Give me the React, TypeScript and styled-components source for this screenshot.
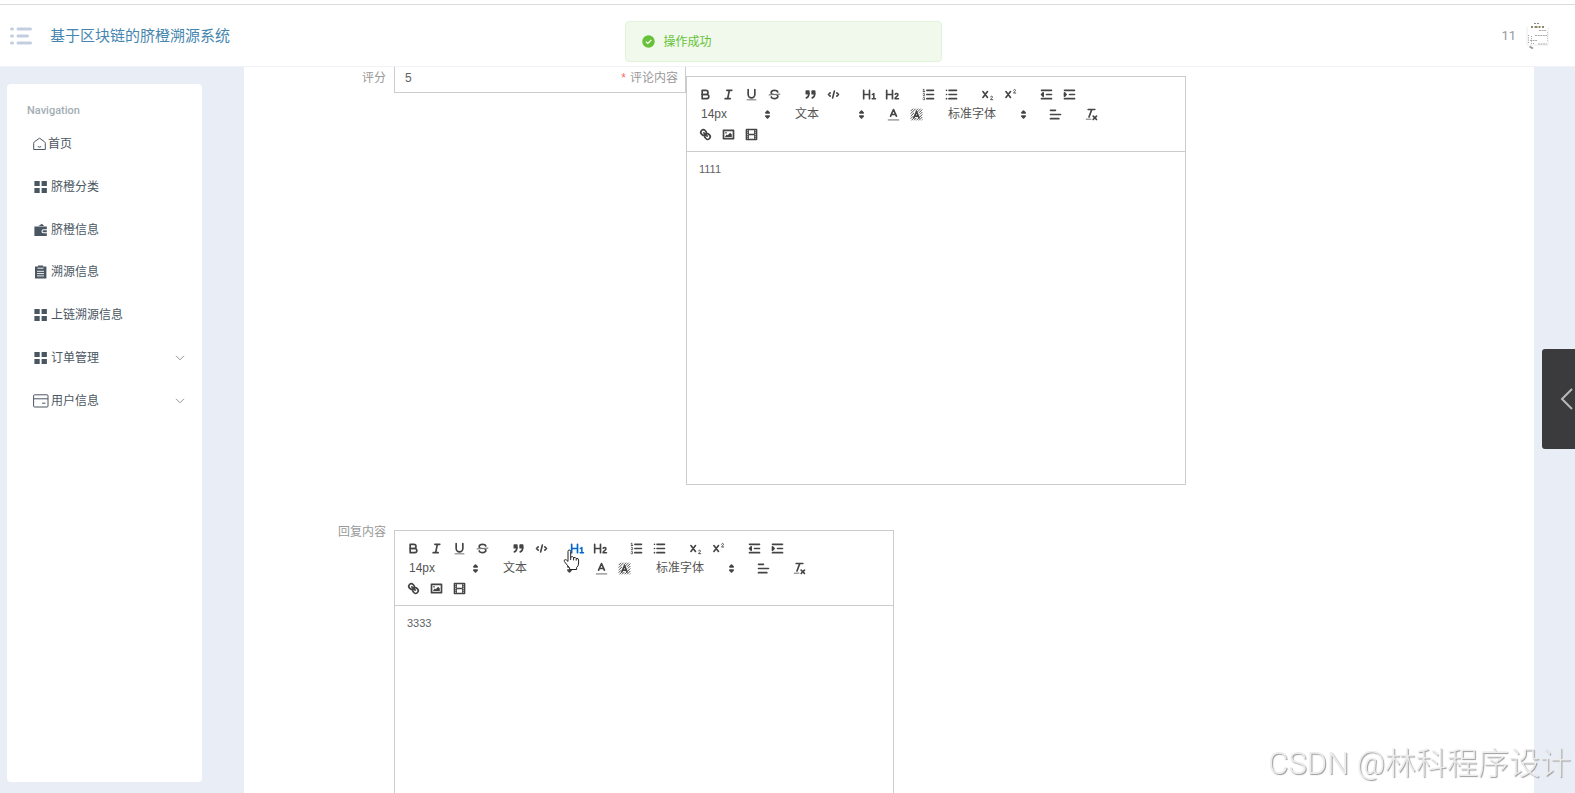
import React from "react";
import styled, { createGlobalStyle } from "styled-components";

const GlobalStyle = createGlobalStyle`
  * { box-sizing: border-box; }
  body {
    margin: 0;
    overflow: hidden;
    background: #fff;
    color: #606266;
    font: 12px/20px "Liberation Sans", "Noto Sans CJK SC", sans-serif;
  }
  button, input, select, textarea { font: inherit; color: inherit; }
`;

const Page = styled.div`
  display: flex;
  flex-direction: column;
  height: 100vh;
  padding-top: 4px;
`;

const Header = styled.header`
  flex: none;
  display: flex;
  align-items: center;
  height: 63px;
  padding: 0 25px 0 10px;
  border-top: 1px solid #dcdcdc;
  border-bottom: 1px solid #f0f2f8;
`;

const MenuButton = styled.button`
  display: flex;
  padding: 0;
  border: 0;
  background: none;
`;

const Title = styled.h1`
  flex: 1;
  margin: 0 0 0 18px;
  color: #4586b0;
  font-size: 15px;
  font-weight: 400;
`;

const Account = styled.div`
  display: flex;
  align-items: center;
  gap: 9px;
  color: #999;
  font: 13px/20px Roboto, sans-serif;
`;

const Body = styled.div`
  flex: 1;
  display: flex;
  min-height: 0;
  background: #e9edf5;
`;

const Sidebar = styled.aside`
  flex: none;
  width: 195px;
  margin: 17px 42px 11px 7px;
  padding: 17px 17px 0 20px;
  border-radius: 4px;
  background: #fff;
`;

const NavTitle = styled.h2`
  margin: 0 0 2px;
  color: #a3adb4;
  font: 500 11px/20px Roboto, sans-serif;
`;

const NavList = styled.nav`
  display: grid;
  grid-auto-rows: 1fr;
  height: 299px;
`;

const NavLink = styled.a<{ $slot: number }>`
  display: grid;
  grid-template-columns: ${(p) => p.$slot}px 1fr auto;
  align-items: center;
  gap: 2px;
  padding-left: 6px;
  color: #4a5763;
  text-decoration: none;
`;

const Main = styled.main`
  flex: 1;
  display: flex;
  flex-direction: column;
  gap: 36px;
  margin-right: 41px;
  overflow: hidden;
  background: #fff;
`;

const FormRow = styled.div`
  flex: none;
  display: flex;
  align-items: flex-start;
`;

const Label = styled.label`
  flex: none;
  width: 150px;
  padding: 1px 8px 0 0;
  color: #999;
  text-align: right;
`;

const ScoreBox = styled.div`
  display: flex;
  width: 292px;
  height: 26px;
  padding-top: 1px;
  border: solid #ccc;
  border-width: 0 1px 1px;
`;

const ScoreInput = styled.input`
  flex: 1;
  min-width: 0;
  height: 20px;
  padding: 0 0 0 10px;
  border: 0;
  outline: 0;
  background: none;
`;

const InnerLabel = styled.label`
  padding-right: 7px;
  color: #999;
`;

const Required = styled.span`
  margin-right: 4px;
  color: #f56c6c;
`;

const EditorBox = styled.section`
  width: 500px;
  margin-top: 9px;
  border: 1px solid #ccc;
  background: #fff;
`;

const Toolbar = styled.div`
  padding: 7px;
  border-bottom: 1px solid #ccc;
`;

const ToolRow = styled.div`
  display: flex;
  gap: 13px;
  height: 20px;
`;

const ToolGroup = styled.div`
  display: flex;
`;

const ToolButton = styled.button<{ $active?: boolean }>`
  display: flex;
  align-items: center;
  justify-content: center;
  width: 23px;
  height: 20px;
  padding: 0;
  border: 0;
  background: none;
  color: ${(p) => (p.$active ? "#0066cc" : "#444")};
`;

const PickerBox = styled.div<{ $wide?: boolean }>`
  display: grid;
  align-items: center;
  width: ${(p) => (p.$wide ? 90 : 81)}px;
  color: #444;

  > * { grid-area: 1 / 1; }
  > svg { justify-self: end; pointer-events: none; }
`;

const PickerSelect = styled.select`
  width: 100%;
  height: 20px;
  padding: 0 15px 0 7px;
  border: 0;
  appearance: none;
  background: none;
  color: #555;
`;

const EditorText = styled.textarea`
  display: block;
  width: 100%;
  height: 332px;
  padding: 7px 12px;
  border: 0;
  outline: 0;
  resize: none;
  background: none;
  font-size: 11px;
`;

const Toast = styled.div`
  position: fixed;
  top: 21px;
  left: calc(50% - 163px);
  display: flex;
  align-items: center;
  gap: 9px;
  width: 317px;
  height: 41px;
  padding-left: 16px;
  border: 1px solid #e1f3d8;
  border-radius: 4px;
  background: #f0f9eb;
  color: #67c23a;
`;

const DrawerTab = styled.button`
  position: fixed;
  right: 0;
  top: calc(50% - 48px);
  display: flex;
  align-items: center;
  justify-content: flex-end;
  width: 33px;
  height: 100px;
  padding: 0 1px 0 0;
  border: 0;
  border-radius: 3px 0 0 3px;
  background: #3b3b3d;
`;

const Watermark = styled.div`
  position: fixed;
  right: 4px;
  bottom: 9px;
  color: #ececec;
  font: 31px/40px Roboto, "Noto Sans CJK SC", sans-serif;
  font-weight: 300;
  text-shadow: 1px 1px 1px #999;
  white-space: nowrap;
`;

const Pointer = styled.svg`
  position: absolute;
  left: 563px;
  top: 549px;
`;

const strokeProps = {
  fill: "none",
  stroke: "currentColor",
  strokeWidth: 2,
  strokeLinecap: "round" as const,
  strokeLinejoin: "round" as const,
};

const hBars = "M2 4V14M9 4V14M2 9H9";

const toolIcons: Record<string, React.ReactNode> = {
  bold: (
    <>
      <path d="M5,4H9.5A2.5,2.5,0,0,1,9.5,9H5Z" />
      <path d="M5,9h5.5A2.5,2.5,0,0,1,10.5,14H5Z" />
    </>
  ),
  italic: <path d="M7 4H13M5 14H11M8 14L10 4" />,
  underline: (
    <>
      <path d="M5,3V9a4,4,0,0,0,8,0V3" />
      <rect x="3" y="15" width="12" height="1" rx=".5" fill="currentColor" stroke="none" />
    </>
  ),
  strike: (
    <>
      <path d="M15.5 8.5L2.5 9.5" strokeWidth="1" />
      <g fill="currentColor" stroke="none">
        <path d="M9.007,8C6.542,7.791,6,7.519,6,6.5,6,5.792,7.283,5,9,5c1.571,0,2.765.679,2.969,1.309a1,1,0,0,0,1.9-.617C13.356,4.106,11.354,3,9,3,6.2,3,4,4.538,4,6.5a3.2,3.2,0,0,0,.5,1.843Z" />
        <path d="M8.984,10C11.457,10.208,12,10.479,12,11.5c0,.708-1.283,1.5-3,1.5-1.571,0-2.765-.679-2.969-1.309a1,1,0,1,0-1.9.617C4.644,13.894,6.646,15,9,15c2.8,0,5-1.538,5-3.5a3.2,3.2,0,0,0-.5-1.843Z" />
      </g>
    </>
  ),
  quote: (
    <g fill="currentColor">
      <rect x="4" y="5" width="3" height="3" />
      <rect x="11" y="5" width="3" height="3" />
      <path d="M7,8c0,4.031-3,5-3,5M14,8c0,4.031-3,5-3,5" fill="none" />
    </g>
  ),
  code: <path d="M5 7L3 9L5 11M13 7L15 9L13 11M10 5L8 13" />,
  heading1: (
    <>
      <path d={hBars} />
      <path d="M12.4 9L14.2 7.8V14M12.2 14H16.2" strokeWidth="1.8" />
    </>
  ),
  heading2: (
    <>
      <path d={hBars} />
      <path d="M12.2 8.8C12.8 7.4 15.6 7.4 15.6 9.4C15.6 11.2 12.2 12 12 14H16.2" strokeWidth="1.8" />
    </>
  ),
  ordered: (
    <>
      <path d="M7 4H15M7 9H15M7 14H15" />
      <path
        d="M2.5 5.5H4.5M2.5 3L3.5 2.5V5.5M4.5,10.5h-2c0-.234,1.85-1.076,1.85-2.234A.959.959,0,0,0,2.5,8.156M2.5,14.846a.959.959,0,0,0,1.85-.109A.7.7,0,0,0,3.75,14a.688.688,0,0,0,.6-.736A.959.959,0,0,0,2.5,13.155"
        strokeWidth="1"
      />
    </>
  ),
  bullet: <path d="M6 4H15M6 9H15M6 14H15M3 4H3M3 9H3M3 14H3" />,
  sub: (
    <>
      <path d="M3.5 5.5L9 12.5M9 5.5L3.5 12.5" />
      <path d="M12.6 11.8C13 10.6 15.2 10.8 15 12.2C14.8 13.2 13 13.8 12.6 15.2H15.3" strokeWidth="1.1" />
    </>
  ),
  sup: (
    <>
      <path d="M3.5 5.5L9 12.5M9 5.5L3.5 12.5" />
      <path d="M12.6 3.8C13 2.6 15.2 2.8 15 4.2C14.8 5.2 13 5.8 12.6 7.2H15.3" strokeWidth="1.1" />
    </>
  ),
  outdent: (
    <>
      <path d="M3 14H15M3 4H15M9 9H15" />
      <path d="M5 7V11L3 9Z" fill="currentColor" />
    </>
  ),
  indent: (
    <>
      <path d="M3 14H15M3 4H15M9 9H15" />
      <path d="M3 7V11L5 9Z" fill="currentColor" />
    </>
  ),
  color: (
    <>
      <path d="M3 15.5H15" opacity=".45" />
      <path d="M5.5 11L9 3L12.5 11M6.4 9H11.6" />
    </>
  ),
  background: (
    <>
      <path
        d="M2 5L5 2M2 8L8 2M2 11L6 7M8 5L11 2M2 14L5 11M10 6L14 2M3 16L6 13M12 7L16 3M6 16L9 13M13 9L16 6M9 16L12 13M13 12L16 9M12 16L16 12M15 16L16 15"
        strokeWidth="1.1"
        strokeLinecap="butt"
      />
      <path d="M5.8 13L9 5.5L12.2 13M6.8 11H11.2" />
    </>
  ),
  align: <path d="M3 9H15M3 14H13M3 4H9" />,
  clean: (
    <>
      <path d="M5 3H13M6 12L9.35 3" />
      <path d="M11 11L15 15M15 11L11 15" />
      <rect x="2" y="14" width="7" height="1" rx=".5" fill="currentColor" stroke="none" />
    </>
  ),
  link: (
    <>
      <path d="M7 7L11 11" />
      <path d="M8.9,4.577a3.476,3.476,0,0,1,.36,4.679A3.476,3.476,0,0,1,4.577,8.9C3.185,7.5,2.035,6.4,4.217,4.217S7.5,3.185,8.9,4.577Z" />
      <path d="M13.423,9.1a3.476,3.476,0,0,0-4.679-.36,3.476,3.476,0,0,0,.36,4.679c1.392,1.392,2.5,2.542,4.679.36S14.815,10.5,13.423,9.1Z" />
    </>
  ),
  image: (
    <>
      <rect x="3" y="4" width="12" height="10" />
      <g fill="currentColor" stroke="none">
        <circle cx="6" cy="7" r="1" />
        <path d="M5 12V11L7 9L8 10L11 7L13 9V12Z" />
      </g>
    </>
  ),
  video: (
    <>
      <rect x="3" y="3" width="12" height="12" />
      <path
        d="M5 3h1v12h-1zM12 3h1v12h-1zM5 8h8v2h-8zM3 5h3v1h-3zM3 7h3v1h-3zM3 10h3v1h-3zM3 12h3v1h-3zM12 5h3v1h-3zM12 7h3v1h-3zM12 10h3v1h-3zM12 12h3v1h-3z"
        fill="currentColor"
        stroke="none"
      />
    </>
  ),
};

const Glyph = ({ children }: { children: React.ReactNode }) => (
  <svg width="15" height="15" viewBox="0 0 18 18" {...strokeProps}>
    {children}
  </svg>
);

const Tools = ({ names, active }: { names: string[]; active?: string }) => (
  <ToolGroup>
    {names.map((name) => (
      <ToolButton key={name} type="button" aria-label={name} $active={name === active}>
        <Glyph>{toolIcons[name]}</Glyph>
      </ToolButton>
    ))}
  </ToolGroup>
);

const Picker = ({ value, label, wide }: { value: string; label: string; wide?: boolean }) => (
  <PickerBox $wide={wide}>
    <PickerSelect aria-label={label} defaultValue={value}>
      <option>{value}</option>
    </PickerSelect>
    <Glyph>
      <path d="M7 11L9 13L11 11ZM7 7L9 5L11 7Z" />
    </Glyph>
  </PickerBox>
);

interface EditorProps {
  id: string;
  text: string;
  active?: string;
}

const Editor = ({ id, text, active }: EditorProps) => (
  <EditorBox>
    <Toolbar>
      <ToolRow>
        <Tools names={["bold", "italic", "underline", "strike"]} />
        <Tools names={["quote", "code"]} />
        <Tools names={["heading1", "heading2"]} active={active} />
        <Tools names={["ordered", "bullet"]} />
        <Tools names={["sub", "sup"]} />
        <Tools names={["outdent", "indent"]} />
      </ToolRow>
      <ToolRow>
        <Picker value="14px" label="size" />
        <Picker value="文本" label="header" />
        <Tools names={["color", "background"]} />
        <Picker value="标准字体" label="font" wide />
        <Tools names={["align"]} />
        <Tools names={["clean"]} />
      </ToolRow>
      <ToolRow>
        <Tools names={["link", "image", "video"]} />
      </ToolRow>
    </Toolbar>
    <EditorText id={id} defaultValue={text} spellCheck={false} />
  </EditorBox>
);

const HomeIcon = () => (
  <svg width="13" height="14" viewBox="0 0 13 14" fill="none" stroke="currentColor">
    <path d="M6.5 1.2L11.6 4.8Q12.3 5.4 12.3 6.3V12.5H.7V6.3Q.7 5.4 1.4 4.8ZM4.8 9.6Q6.5 10.6 8.2 9.6" />
  </svg>
);

const GridIcon = () => (
  <svg width="15" height="14" viewBox="0 0 15 14" fill="currentColor">
    <path d="M1.4 1h5.3v5H1.4zM8.6 1h5.3v5H8.6zM1.4 8h5.3v5H1.4zM8.6 8h5.3v5H8.6z" />
  </svg>
);

const WalletIcon = () => (
  <svg width="15" height="14" viewBox="0 0 15 14" fill="currentColor">
    <path d="M5.5 3L9 .8L11 3Z" />
    <path d="M1.4 3.6H13.8V6.2H10.5A2 2 0 0 0 10.5 10.2H13.8V13H1.4Z" />
    <path d="M10.5 7.3H13.8V9.2H10.5A.9.9 0 0 1 10.5 7.3Z" />
  </svg>
);

const ListIcon = () => (
  <svg width="15" height="14" viewBox="0 0 15 14">
    <path d="M2 1.6H5V.4H10V1.6H13.4V13.6H2Z" fill="currentColor" />
    <path d="M4.5 3.2H10.5M4 6.3H11M4 8.6H11M4 10.9H11" stroke="#fff" strokeWidth=".9" />
  </svg>
);

const CardIcon = () => (
  <svg width="16" height="14" viewBox="0 0 16 14" fill="none" stroke="currentColor">
    <rect x=".6" y=".8" width="14.4" height="12.2" rx="1" />
    <path d="M.6 4.8H15M9 9.2H12.5" />
  </svg>
);

const Chevron = () => (
  <svg width="10" height="6" viewBox="0 0 10 6" fill="none" stroke="#909399">
    <path d="M1 .8L5 4.8L9 .8" />
  </svg>
);

const navItems = [
  { text: "首页", icon: <HomeIcon />, slot: 13 },
  { text: "脐橙分类", icon: <GridIcon />, slot: 16 },
  { text: "脐橙信息", icon: <WalletIcon />, slot: 16 },
  { text: "溯源信息", icon: <ListIcon />, slot: 16 },
  { text: "上链溯源信息", icon: <GridIcon />, slot: 16 },
  { text: "订单管理", icon: <GridIcon />, slot: 16, more: true },
  { text: "用户信息", icon: <CardIcon />, slot: 16, more: true },
];

const Avatar = () => (
  <svg width="25" height="28" viewBox="0 0 25 28" fill="none">
    <path d="M2 5V23H23V5" stroke="#ecece8" />
    <path d="M9 1.5H14" stroke="#888" strokeDasharray="2 1" />
    <path d="M6 5H19" stroke="#8d8768" strokeWidth="2" strokeDasharray="2 1.5 3 1" />
    <path d="M14 8.5H21M10 13.5H22M5 18.5H12M13 22H22" stroke="#aaa" strokeDasharray="2 .6" />
    <path d="M3.5 13V21M6.5 14V20" stroke="#999" strokeDasharray="1 1.3" />
    <path d="M6 21.5H10" stroke="#aaa" strokeDasharray="1 1" />
    <path d="M22.5 10V20" stroke="#ccc" strokeDasharray="1 1" />
    <path d="M4.5 24.5L8 26.5" stroke="#999" strokeWidth="2" />
  </svg>
);

export default function App() {
  return (
    <Page>
      <GlobalStyle />
      <Header>
        <MenuButton type="button" aria-label="menu">
          <svg width="22" height="18" viewBox="0 0 22 18" stroke="#c5cde0" strokeWidth="3" strokeLinecap="round">
            <path d="M1.5 2H2.5M8 2H20.5M1.5 9H2.5M8 9H17.5M1.5 16H2.5M8 16H20.5" />
          </svg>
        </MenuButton>
        <Title>基于区块链的脐橙溯源系统</Title>
        <Account>
          <span>11</span>
          <Avatar />
        </Account>
      </Header>
      <Body>
        <Sidebar>
          <NavTitle>Navigation</NavTitle>
          <NavList>
            {navItems.map((item) => (
              <NavLink key={item.text} href="#" $slot={item.slot}>
                {item.icon}
                <span>{item.text}</span>
                {item.more && <Chevron />}
              </NavLink>
            ))}
          </NavList>
        </Sidebar>
        <Main>
          <FormRow>
            <Label htmlFor="score">评分</Label>
            <ScoreBox>
              <ScoreInput id="score" defaultValue="5" />
              <InnerLabel htmlFor="comment">
                <Required>*</Required>评论内容
              </InnerLabel>
            </ScoreBox>
            <Editor id="comment" text="1111" />
          </FormRow>
          <FormRow>
            <Label htmlFor="reply">回复内容</Label>
            <Editor id="reply" text="3333" active="heading1" />
          </FormRow>
        </Main>
      </Body>
      <Toast role="status">
        <svg width="13" height="13" viewBox="0 0 13 13">
          <circle cx="6.5" cy="6.5" r="6.2" fill="#67c23a" />
          <path d="M3.8 6.6L5.8 8.5L9.3 5" fill="none" stroke="#fff" strokeWidth="1.2" />
        </svg>
        操作成功
      </Toast>
      <DrawerTab type="button" aria-label="open">
        <svg width="14" height="22" viewBox="0 0 14 22" fill="none" stroke="#b8b8b8" strokeWidth="2">
          <path d="M12 1L2 11L12 21" />
        </svg>
      </DrawerTab>
      <Pointer width="18" height="22" viewBox="0 0 18 22" fill="#fff" stroke="#222" strokeLinejoin="round">
        <path d="M5 2.5Q5 1 6.3 1T7.7 2.5V8Q10 7 10.6 8.6Q12.7 8 13.2 9.4Q15.6 9 15.6 11V14Q15.6 17 13.6 18.6V20.5H6.6V19Q4.6 16.6 1.4 12.6Q.6 11 2.2 10.6Q3.4 10.6 5 12.4Z" />
        <path d="M7.7 8V11M10.6 8.6V11.4M13.2 9.4V11.6" />
      </Pointer>
      <Watermark>CSDN @林科程序设计</Watermark>
    </Page>
  );
}
